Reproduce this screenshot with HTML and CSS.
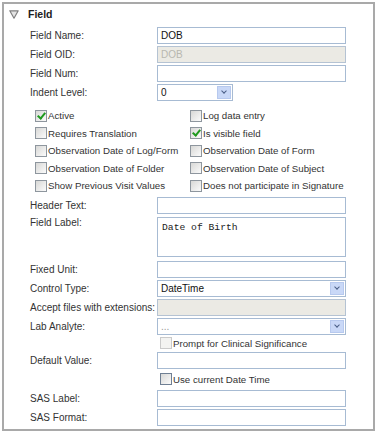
FILE: index.html
```html
<!DOCTYPE html>
<html lang="en">
<head>
    <meta charset="UTF-8">
    <title>Field</title>
    <link rel="stylesheet" href="styles.css">
</head>
<body>
    <div class="panel">
        <div class="panel-head">
            <svg class="toggle" width="10" height="9" viewBox="0 0 10 9">
                <path d="M0.8 0.8 H9.2 L5 8.2 Z" fill="#e4e4e4" stroke="#808080" stroke-width="1.2" stroke-linejoin="round"/>
            </svg>
            <span class="title">Field</span>
        </div>

        <div class="rows">
            <label>Field Name:</label>
            <input class="text" type="text" value="DOB">
            <label>Field OID:</label>
            <input class="text" type="text" value="DOB" disabled>
            <label>Field Num:</label>
            <input class="text" type="text" value="">
            <label>Indent Level:</label>
            <div class="select short"><span class="select-value">0</span><span class="arrow"></span></div>
        </div>

        <div class="checks">
            <div class="check"><span class="box on"></span>Active</div>
            <div class="check"><span class="box"></span>Log data entry</div>
            <div class="check"><span class="box"></span>Requires Translation</div>
            <div class="check"><span class="box on"></span>Is visible field</div>
            <div class="check"><span class="box"></span>Observation Date of Log/Form</div>
            <div class="check"><span class="box"></span>Observation Date of Form</div>
            <div class="check"><span class="box"></span>Observation Date of Folder</div>
            <div class="check"><span class="box"></span>Observation Date of Subject</div>
            <div class="check"><span class="box"></span>Show Previous Visit Values</div>
            <div class="check"><span class="box"></span>Does not participate in Signature</div>
        </div>

        <div class="rows lower">
            <label>Header Text:</label>
            <input class="text" type="text" value="">
            <label class="top">Field Label:</label>
            <textarea class="area">Date of Birth</textarea>
            <label class="gap4">Fixed Unit:</label>
            <input class="text gap4" type="text" value="">
            <label>Control Type:</label>
            <div class="select"><span class="select-value">DateTime</span><span class="arrow"></span></div>
            <label>Accept files with extensions:</label>
            <input class="text" type="text" value="" disabled>
            <label>Lab Analyte:</label>
            <div class="select"><span class="select-value dim">...</span><span class="arrow"></span></div>
            <div class="check inline"><span class="box off"></span>Prompt for Clinical Significance</div>
            <label>Default Value:</label>
            <input class="text" type="text" value="">
            <div class="check inline tall"><span class="box dark"></span>Use current Date Time</div>
            <label>SAS Label:</label>
            <input class="text" type="text" value="">
            <label>SAS Format:</label>
            <input class="text" type="text" value="">
        </div>
    </div>
</body>
</html>
```

FILE: styles.css
```css
* {
    margin: 0;
    padding: 0;
    box-sizing: border-box;
}

body {
    font-family: 'Liberation Sans', Arial, sans-serif;
    font-size: 10px;
    color: #333;
    background: #ffffff;
    padding: 2px;
}

.panel {
    width: 373px;
    border: 2px solid #a9a9a9;
    padding-bottom: 3px;
}

.panel-head {
    height: 20px;
    display: flex;
    align-items: center;
    padding-left: 5px;
}

.toggle {
    display: block;
    margin-top: 1px;
}

.title {
    font-weight: bold;
    font-size: 10.5px;
    margin-left: 9px;
    color: #222;
}

.rows {
    display: grid;
    grid-template-columns: 127px 189px;
    row-gap: 2px;
    padding-left: 26px;
    padding-top: 3px;
    align-items: center;
}

.rows label {
    line-height: 17px;
}

.rows label.top {
    align-self: start;
    line-height: 14px;
}

.gap4 {
    margin-top: 2px;
}

.rows.lower {
    padding-top: 2px;
}

.text {
    display: block;
    width: 189px;
    height: 17px;
    border: 1px solid #a7bbd3;
    background: #fff;
    padding: 0 3px;
    font-family: 'Liberation Sans', Arial, sans-serif;
    font-size: 10px;
    color: #111;
    outline: none;
}

.text:disabled {
    background: #ebeae4;
    border-color: #b5c3d3;
    color: #b8b8b0;
}

.area {
    display: block;
    width: 189px;
    height: 40px;
    margin-top: 1px;
    border: 1px solid #a7bbd3;
    padding: 4px 4px;
    font-family: 'Liberation Mono', 'Courier New', monospace;
    font-size: 9.7px;
    line-height: 11px;
    color: #222;
    resize: none;
    outline: none;
}

.select {
    display: flex;
    align-items: center;
    width: 189px;
    height: 17px;
    border: 1px solid #a7bbd3;
    background: #fff;
    padding-left: 3px;
    color: #111;
}

.select.short {
    width: 76px;
}

.select-value {
    flex: 1;
}

.select-value.dim {
    color: #999;
}

.arrow {
    width: 14px;
    height: 13px;
    margin-right: 1px;
    background: #c9d8f7;
    border: 1px solid #b7c9ee;
    position: relative;
}

.arrow::after {
    content: "";
    position: absolute;
    left: 4px;
    top: 2px;
    width: 3px;
    height: 3px;
    border-right: 1.5px solid #4a5e86;
    border-bottom: 1.5px solid #4a5e86;
    transform: rotate(45deg);
}

.checks {
    display: grid;
    grid-template-columns: 155px 160px;
    grid-auto-rows: 17.5px;
    padding-left: 31px;
    margin-top: 6px;
    font-size: 9.7px;
}

.check {
    display: flex;
    align-items: center;
    white-space: nowrap;
}

.box {
    width: 12px;
    height: 12px;
    margin-right: 1px;
    border: 1px solid #8e969e;
    background: linear-gradient(135deg, #d8d8d6, #fbfbfb);
    position: relative;
    flex: none;
}

.box.on::after {
    content: "";
    position: absolute;
    left: 3px;
    top: 0px;
    width: 3px;
    height: 6px;
    border-right: 2px solid #1f9a1f;
    border-bottom: 2px solid #1f9a1f;
    transform: rotate(40deg);
}

.box.off {
    border-color: #cacaca;
    background: #f3f3f1;
}

.box.dark {
    border-color: #6f7f93;
}

.check.inline {
    grid-column: 2;
    height: 13px;
    margin-left: 3px;
    font-size: 9.7px;
}

.check.tall {
    height: 17px;
}
```
